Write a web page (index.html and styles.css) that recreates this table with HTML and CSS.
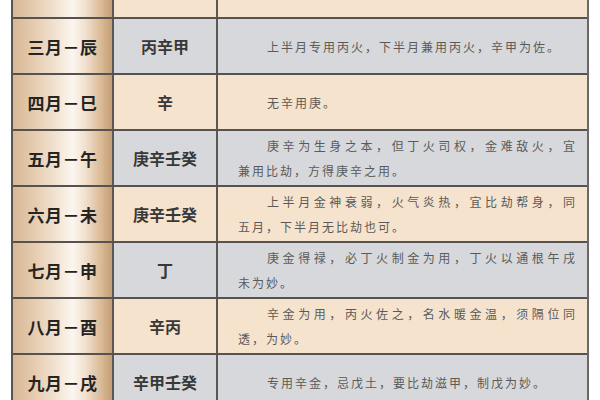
FILE: index.html
```html
<!DOCTYPE html>
<html lang="zh-CN">
<head>
<meta charset="utf-8">
<title>月令用神表</title>
<link rel="stylesheet" href="styles.css">
</head>
<body>
<div class="table">
  <div class="row peach top">
    <div class="c month"></div>
    <div class="c stem"></div>
    <div class="c desc"></div>
  </div>
  <div class="row gray">
    <div class="c month">三月－辰</div>
    <div class="c stem">丙辛甲</div>
    <div class="c desc"><p class="txt"><span class="ln first">上半月专用丙火，下半月兼用丙火，辛甲为佐。</span></p></div>
  </div>
  <div class="row peach">
    <div class="c month">四月－巳</div>
    <div class="c stem">辛</div>
    <div class="c desc"><p class="txt"><span class="ln first">无辛用庚。</span></p></div>
  </div>
  <div class="row gray">
    <div class="c month">五月－午</div>
    <div class="c stem">庚辛壬癸</div>
    <div class="c desc"><p class="txt"><span class="ln first just">庚辛为生身之本，但丁火司权，金难敌火，宜</span><span class="ln">兼用比劫，方得庚辛之用。</span></p></div>
  </div>
  <div class="row peach">
    <div class="c month">六月－未</div>
    <div class="c stem">庚辛壬癸</div>
    <div class="c desc"><p class="txt"><span class="ln first just">上半月金神衰弱，火气炎热，宜比劫帮身，同</span><span class="ln">五月，下半月无比劫也可。</span></p></div>
  </div>
  <div class="row gray">
    <div class="c month">七月－申</div>
    <div class="c stem">丁</div>
    <div class="c desc"><p class="txt"><span class="ln first just">庚金得禄，必丁火制金为用，丁火以通根午戌</span><span class="ln">未为妙。</span></p></div>
  </div>
  <div class="row peach">
    <div class="c month">八月－酉</div>
    <div class="c stem">辛丙</div>
    <div class="c desc"><p class="txt"><span class="ln first just">辛金为用，丙火佐之，名水暖金温，须隔位同</span><span class="ln">透，为妙。</span></p></div>
  </div>
  <div class="row gray">
    <div class="c month">九月－戌</div>
    <div class="c stem">辛甲壬癸</div>
    <div class="c desc"><p class="txt"><span class="ln first">专用辛金，忌戊土，要比劫滋甲，制戊为妙。</span></p></div>
  </div>
</div>
</body>
</html>
```
FILE: styles.css
```css
html, body {
  margin: 0;
  padding: 0;
  background: #ffffff;
  overflow: hidden;
}

body {
  font-family: "Noto Sans CJK SC", "Noto Sans", sans-serif;
}

.table {
  margin-left: 11px;
  width: 578px;
  box-sizing: border-box;
  border-left: 2px solid #585654;
  border-right: 2px solid #6a6866;
}

.row {
  display: grid;
  grid-template-columns: 101px 104px 1fr;
  height: 56px;
  box-sizing: border-box;
  border-bottom: 2px solid #555350;
}

.row.top {
  height: 19px;
}

.c {
  box-sizing: border-box;
  display: flex;
  align-items: center;
}

.month {
  justify-content: center;
  border-right: 2px solid #5a5856;
  background: linear-gradient(to right,
    #d8b896 0%,
    #e6ccb0 22%,
    #f1e1cf 42%,
    #fbf6ef 60%,
    #f2e3d2 72%,
    #dcbc9a 88%,
    #c49e76 100%);
  font-size: 17px;
  font-weight: 700;
  color: #262422;
  letter-spacing: 0.5px;
}

.stem {
  justify-content: center;
  border-right: 2px solid #5a5856;
  font-size: 16px;
  font-weight: 700;
  color: #3a3836;
}

.desc {
  padding: 0 10px 0 20px;
}

.gray .stem,
.gray .desc {
  background: #d7d8dc;
}

.peach .stem,
.peach .desc {
  background: #f6e3ce;
}

.txt {
  margin: 0;
  width: 100%;
  font-size: 12px;
  letter-spacing: 2px;
  line-height: 25px;
  color: #5c5a58;
}

.ln {
  display: block;
  white-space: nowrap;
}

.first {
  text-indent: 29px;
}

.just {
  text-align: justify;
  text-align-last: justify;
}
```
